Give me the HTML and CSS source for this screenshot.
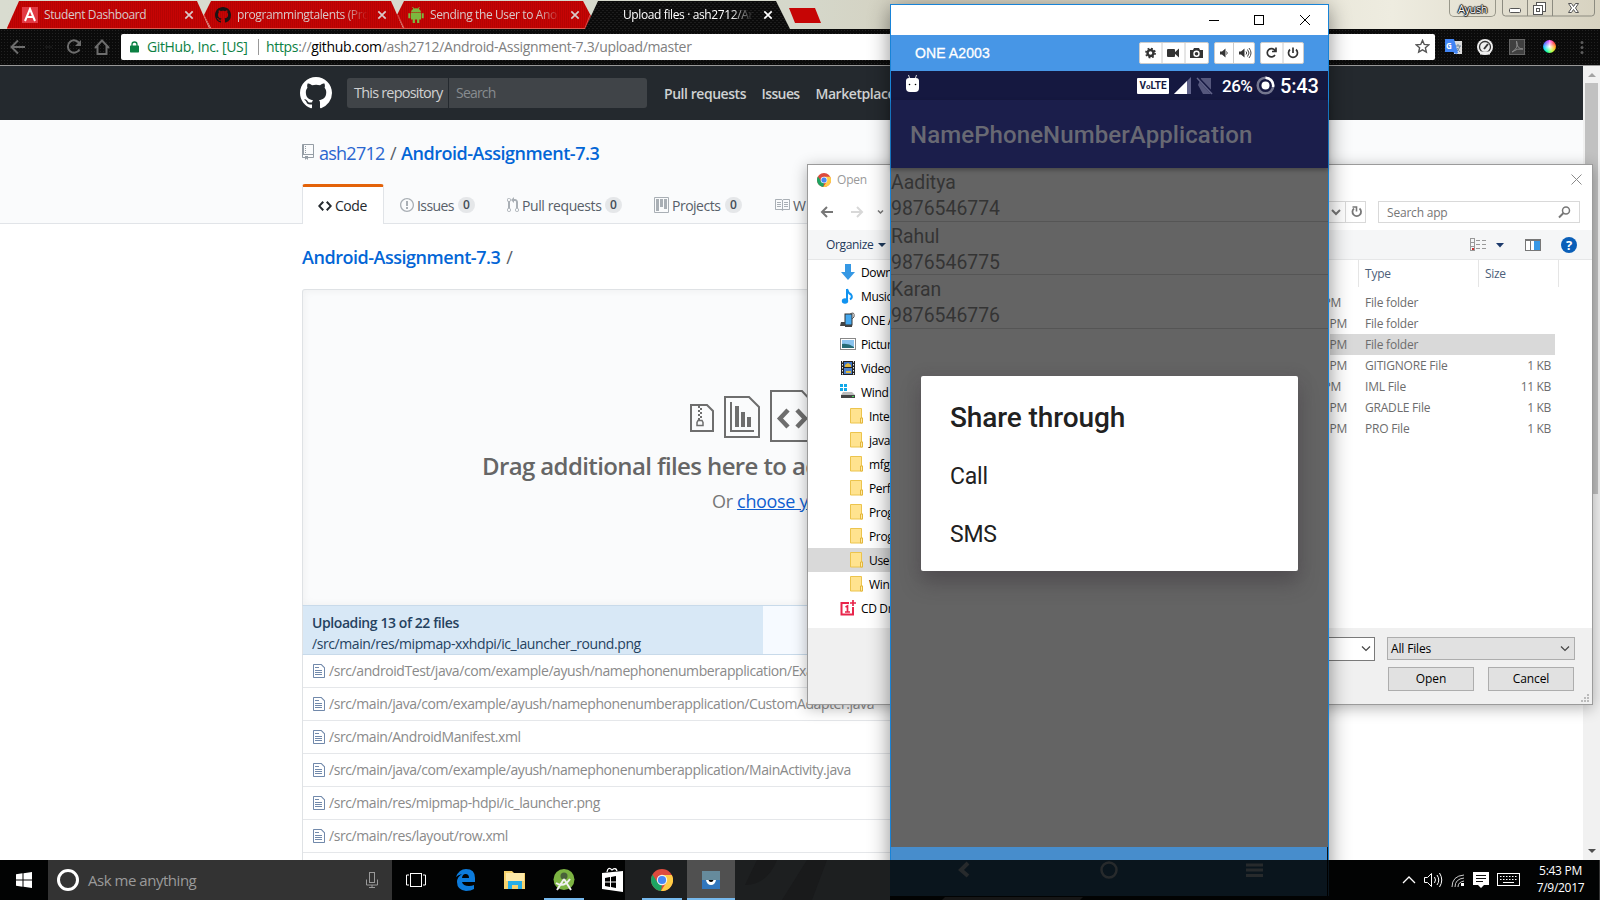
FILE: index.html
```html
<!DOCTYPE html>
<html lang="en">
<head>
<meta charset="utf-8">
<title>Upload files · ash2712/Android-Assignment-7.3</title>
<link rel="stylesheet" href="styles.css">
</head>
<body>
<svg class="defs" width="0" height="0" aria-hidden="true">
  <defs>
    <symbol id="octocat" viewBox="0 0 16 16"><path d="M8 0C3.58 0 0 3.58 0 8c0 3.54 2.29 6.53 5.47 7.59.4.07.55-.17.55-.38 0-.19-.01-.82-.01-1.49-2.01.37-2.53-.49-2.69-.94-.09-.23-.48-.94-.82-1.13-.28-.15-.68-.52-.01-.53.63-.01 1.08.58 1.23.82.72 1.21 1.87.87 2.33.66.07-.52.28-.87.51-1.07-1.78-.2-3.64-.89-3.64-3.95 0-.87.31-1.59.82-2.15-.08-.2-.36-1.02.08-2.12 0 0 .67-.21 2.2.82.64-.18 1.32-.27 2-.27s1.36.09 2 .27c1.53-1.04 2.2-.82 2.2-.82.44 1.1.16 1.92.08 2.12.51.56.82 1.27.82 2.15 0 3.07-1.87 3.75-3.65 3.95.29.25.54.73.54 1.48 0 1.07-.01 1.93-.01 2.2 0 .21.15.46.55.38A8.01 8.01 0 0 0 16 8c0-4.42-3.58-8-8-8z"/></symbol>
    <symbol id="file" viewBox="0 0 12 16"><path d="M6 5H2V4h4v1zM2 8h7V7H2v1zm0 2h7V9H2v1zm0 2h7v-1H2v1zm10-7.500V14c0 .55-.45 1-1 1H1c-.55 0-1-.45-1-1V2c0-.55.45-1 1-1h7.500L12 4.500zM11 5L8 2H1v12h10V5z"/></symbol>
    <symbol id="close" viewBox="0 0 10 10"><path d="M1.300 1.300l7.400 7.400M8.700 1.300L1.300 8.700" fill="none" stroke="currentColor" stroke-width="1.700"/></symbol>
    <symbol id="folder" viewBox="0 0 14 16"><path d="M.5.500h11v9.500h1v5H.5z" fill="#ffe38f" stroke="#ecc44d"/><path d="M10.500 15v-5h2v5z" fill="#ffeaa8" stroke="#e3b63a"/></symbol>
    <symbol id="chrome" viewBox="0 0 22 22">
      <circle cx="11" cy="11" r="11" fill="#dd4b3e"/>
      <path d="M1.500 5.500L6.700 13.500 11 16 10 22A11 11 0 0 1 1.500 5.500z" fill="#1da462"/>
      <path d="M11 6h9.800A11 11 0 0 1 10 22l5.300-8.500z" fill="#ffcd46"/>
      <circle cx="11" cy="11" r="5.200" fill="#f4f4f4"/><circle cx="11" cy="11" r="4.100" fill="#4688f4"/>
    </symbol>
  </defs>
</svg>
<main class="desktop">
  <section class="browser">
    <div class="tabstrip">
      <svg class="tab-shapes" width="830" height="29" viewBox="0 0 830 29">
        <defs><pattern id="stripe" width="2" height="2" patternUnits="userSpaceOnUse"><rect width="2" height="2" fill="#c60404"/><rect width="1" height="2" fill="#b60303"/></pattern>
        <pattern id="weave" width="4" height="4" patternUnits="userSpaceOnUse"><rect width="4" height="4" fill="#0b0b0b"/><rect width="2" height="1" fill="#1d1d1d"/><rect x="2" y="2" width="2" height="1" fill="#1d1d1d"/></pattern></defs>
        <path d="M7 28L19 1H197L209 28z" fill="url(#stripe)"/>
        <path d="M211 28L204 15 211 1H391L403 28z" fill="url(#stripe)"/>
        <path d="M404 28L397 15 404 1H583L591 16 586 28z" fill="url(#stripe)"/>
        <path d="M204 15l6 13M398 15l6 13M590 15l-5 13" stroke="#dc4a45" fill="none"/>
        <path d="M7 28.500H586" stroke="#e05a50"/>
        <path d="M585 29L598 1H776L790 29z" fill="url(#weave)"/>
        <path d="M789 8h26l6 15h-26z" fill="#c60505"/>
      </svg>
      <div class="tabs">
        <div class="tab t1"><svg width="16" height="16"><rect width="16" height="16" fill="#e23a44"/><path d="M3 14L8 2l5 12M5 10h6" fill="none" stroke="#fff" stroke-width="2"/></svg><span>Student Dashboard</span><svg class="x" width="10" height="10"><use href="#close"/></svg></div>
        <div class="tab t2"><svg width="16" height="16" fill="#1b1414"><use href="#octocat"/></svg><span>programmingtalents (Pro</span><svg class="x" width="10" height="10"><use href="#close"/></svg></div>
        <div class="tab t3"><svg width="16" height="16" viewBox="0 0 16 16" fill="#7cb83f"><path d="M3 5.500a5 4.200 0 0 1 10 0zM3 6h10v6.500H3zM.3 6.300h2v5h-2zM13.700 6.300h2v5h-2zM4.700 12h2.200v4H4.700zM9.100 12h2.200v4H9.100z"/><path d="M4.500 0l1.500 2M11.500 0L10 2" stroke="#7cb83f"/></svg><span>Sending the User to Ano</span><svg class="x" width="10" height="10"><use href="#close"/></svg></div>
        <div class="tab t4"><span>Upload files · ash2712/An</span><svg class="x" width="10" height="10"><use href="#close"/></svg></div>
      </div>
      <div class="captions"><span class="user">Ayush</span>
        <svg width="93" height="17" viewBox="0 0 93 17"><path d="M.5 0v13q0 3 3 3h86q3 0 3-3V0M25.500 0v16M50.500 0v16" fill="none" stroke="#8c8b80"/><g fill="#fff" stroke="#555"><rect x="7.500" y="8.500" width="11" height="4" rx="1"/><rect x="34.500" y="2.500" width="9" height="9"/><rect x="31.500" y="5.500" width="9" height="9"/><rect x="34.500" y="8.500" width="3" height="3"/><path d="M66.500 3.500h3l2 3 2-3h3l-3 4.500 3 4.500h-3l-2-3-2 3h-3l3-4.500z"/></g></svg>
      </div>
    </div>
    <div class="toolbar">
      <svg class="nav" width="121" height="36" viewBox="0 0 121 36" fill="none" stroke="#6d6d6d" stroke-width="2"><path d="M25 18H12M18 11.500L11.500 18l6.500 6.500"/><path d="M45 18h7" stroke="#171717"/><path d="M79.500 14.500A6.200 6.200 0 1 0 79.500 20.500"/><path d="M81 11v6h-6z" fill="#6d6d6d" stroke="none"/><path d="M95 19l7-7.500 7 7.500M97.500 17v8h9v-8"/></svg>
      <div class="omnibox"><svg width="9" height="12" viewBox="0 0 9 12"><path d="M2 5V3.500a2.500 2.500 0 0 1 5 0V5" fill="none" stroke="#0b8043" stroke-width="1.300"/><rect y="4.500" width="9" height="7" rx=".7" fill="#0b8043"/></svg><span class="cert">GitHub, Inc. [US]</span><i></i><span class="url"><b>https</b>://<em>github.com</em>/ash2712/Android-Assignment-7.3/upload/master</span>
        <svg class="star" width="15" height="15" viewBox="0 0 16 16"><path d="M8 1.500l1.900 4.300 4.700.5-3.500 3.100 1 4.600L8 11.600 3.900 14l1-4.600L1.400 6.300l4.700-.5z" fill="none" stroke="#555" stroke-width="1.500"/></svg>
      </div>
      <svg class="ext" width="150" height="36" viewBox="0 0 150 36">
        <rect x="10" y="12" width="8" height="13" fill="#dcdcdc"/><path d="M11 17h6M14 15v2m2 0q-1 4-4 6m1-4q2 3 3 4" stroke="#70859b" fill="none"/><path d="M1 10h9l4 14-2 1-3-2H1z" fill="#4285f4"/><text x="2" y="20" font-family="Open Sans" font-weight="700" font-size="8" fill="#fff">G</text>
        <circle cx="41" cy="18" r="8" fill="#eee"/><circle cx="41" cy="18" r="5.500" fill="none" stroke="#333" stroke-width="1.300"/><path d="M40 20l4-5" stroke="#333" stroke-width="2"/><path d="M36 24h10" stroke="#eee" stroke-width="3"/>
        <rect x="65.500" y="10.500" width="15" height="15" fill="#404040" stroke="#666"/><path d="M68 23q7-4 4.500-11 0 8 6.500 8-6-1-11 3z" fill="none" stroke="#888"/>
        <foreignObject x="99" y="11" width="14" height="15"><div class="wheel"></div></foreignObject>
        <g fill="#5d5d5d"><circle cx="138" cy="13.500" r="1.500"/><circle cx="138" cy="18.500" r="1.500"/><circle cx="138" cy="23.500" r="1.500"/></g>
      </svg>
    </div>
    <div class="viewport">
      <div class="page">
        <header class="gh-header">
          <svg width="32" height="32" fill="#fff"><use href="#octocat"/></svg>
          <div class="gh-search"><span>This repository</span><span class="ph">Search</span></div>
          <nav><a class="n1">Pull requests</a><a class="n2">Issues</a><a class="n3">Marketplace</a></nav>
        </header>
        <div class="repohead">
          <h1><svg width="12" height="16" viewBox="0 0 12 16"><path d="M4 9H3V8h1v1zm0-3H3v1h1V6zm0-2H3v1h1V4zm0-2H3v1h1V2zm8-1v12c0 .55-.45 1-1 1H6v2l-1.500-1.500L3 16v-2H1c-.55 0-1-.45-1-1V1c0-.55.45-1 1-1h10c.55 0 1 .45 1 1zm-1 10H1v2h2v-1h3v1h5v-2zm0-10H2v9h9V1z"/></svg><span class="owner">ash2712</span><span class="slash">/</span><strong>Android-Assignment-7.3</strong></h1>
          <div class="reponav">
            <a class="active"><svg width="14" height="16" viewBox="0 0 14 16"><path d="M9.500 3L8 4.500 11.500 8 8 11.500 9.500 13 14 8 9.500 3zm-5 0L0 8l4.500 5L6 11.500 2.500 8 6 4.500 4.500 3z"/></svg><span>Code</span></a>
            <a class="i"><svg width="14" height="16" viewBox="0 0 14 16"><path d="M7 2.300c3.140 0 5.700 2.560 5.700 5.700s-2.560 5.700-5.700 5.700A5.710 5.710 0 0 1 1.300 8c0-3.140 2.560-5.700 5.700-5.700zM7 1C3.140 1 0 4.140 0 8s3.140 7 7 7 7-3.140 7-7-3.140-7-7-7zm1 3H6v5h2V4zm0 6H6v2h2v-2z"/></svg><span>Issues</span><b>0</b></a>
            <a class="p"><svg width="12" height="16" viewBox="0 0 12 16"><path d="M11 11.280V5c-.03-.78-.34-1.470-.94-2.060C9.460 2.350 8.780 2.030 8 2H7V0L4 3l3 3V4h1c.27.02.48.11.69.31.21.2.3.42.31.69v6.280A1.993 1.993 0 0 0 10 15a1.993 1.993 0 0 0 1-3.720zm-1 2.920c-.66 0-1.200-.55-1.200-1.200 0-.65.55-1.200 1.200-1.200.65 0 1.200.55 1.200 1.200 0 .65-.55 1.200-1.200 1.200zM4 3c0-1.110-.89-2-2-2a1.993 1.993 0 0 0-1 3.720v6.560A1.993 1.993 0 0 0 2 15a1.993 1.993 0 0 0 1-3.720V4.720c.59-.34 1-.98 1-1.720zm-.8 10c0 .66-.55 1.200-1.200 1.200-.65 0-1.200-.55-1.200-1.200 0-.65.55-1.200 1.200-1.200.65 0 1.200.55 1.200 1.200zM2 4.200C1.340 4.200.8 3.650.8 3c0-.65.55-1.200 1.200-1.200.65 0 1.200.55 1.200 1.200 0 .65-.55 1.200-1.200 1.200z"/></svg><span>Pull requests</span><b>0</b></a>
            <a class="j"><svg width="15" height="16" viewBox="0 0 15 16"><path fill-rule="evenodd" d="M10 12h3V2h-3v10zm-4-2h3V2H6v8zm-4 4h3V2H2v12zm-1 1h13V1H1v14zM14 0H1a1 1 0 0 0-1 1v14a1 1 0 0 0 1 1h13a1 1 0 0 0 1-1V1a1 1 0 0 0-1-1z"/></svg><span>Projects</span><b>0</b></a>
            <a class="w"><svg width="16" height="16" viewBox="0 0 16 16"><path d="M3 5h4v1H3V5zm0 3h4V7H3v1zm0 2h4V9H3v1zm11-5h-4v1h4V5zm0 2h-4v1h4V7zm0 2h-4v1h4V9zm2-6v9c0 .55-.45 1-1 1H9.500l-1 1-1-1H2c-.55 0-1-.45-1-1V3c0-.55.45-1 1-1h5.500l1 1 1-1H15c.55 0 1 .45 1 1zm-8 .5L7.500 3H2v9h6V3.500zm7-.5H9.500l-.5.5V12h6V3z"/></svg><span>W</span></a>
          </div>
        </div>
        <div class="content">
          <div class="crumb"><strong>Android-Assignment-7.3</strong><span>/</span></div>
          <div class="drop">
            <svg width="126" height="52" viewBox="0 0 126 52" fill="none" stroke="#6e6e6e" stroke-width="2"><path d="M1 15h16l6 6v20H1z"/><g stroke="none" fill="#6e6e6e"><path d="M8 16h2v2H8zM10 18h2v2h-2zM8 20h2v2H8zM10 22h2v2h-2zM8 24h2v2H8zM10 26h2v2h-2zM8 28h2v2H8z"/></g><path d="M7 35.500h6v-3l-1-2H8l-1 2z" stroke-width="1.500"/><path d="M35 7h24l10 10v30H35zM41 12v29h23" /><path d="M47 16v21M53 22v15M59 27v10" stroke-width="4"/><path d="M81 1h31l13 14v36H81z"/><path d="M98 20l-8 8.500 8 8.500M107 20l8 8.500-8 8.500" stroke-width="4.500"/></svg>
            <p class="drag">Drag additional files here to add</p>
            <p class="or">Or <u>choose y</u></p>
          </div>
          <div class="progress"><div><b>Uploading 13 of 22 files</b><span>/src/main/res/mipmap-xxhdpi/ic_launcher_round.png</span></div></div>
          <ul class="files">
            <li><svg width="12" height="16"><use href="#file"/></svg><span>/src/androidTest/java/com/example/ayush/namephonenumberapplication/Exam</span></li>
            <li><svg width="12" height="16"><use href="#file"/></svg><span>/src/main/java/com/example/ayush/namephonenumberapplication/CustomAdapter.java</span></li>
            <li><svg width="12" height="16"><use href="#file"/></svg><span>/src/main/AndroidManifest.xml</span></li>
            <li><svg width="12" height="16"><use href="#file"/></svg><span>/src/main/java/com/example/ayush/namephonenumberapplication/MainActivity.java</span></li>
            <li><svg width="12" height="16"><use href="#file"/></svg><span>/src/main/res/mipmap-hdpi/ic_launcher.png</span></li>
            <li><svg width="12" height="16"><use href="#file"/></svg><span>/src/main/res/layout/row.xml</span></li>
            <li></li>
          </ul>
        </div>
      </div>
      <div class="scrollbar"><i class="up"></i><div class="thumb"></div><i class="down"></i></div>
    </div>
  </section>

  <section class="dialog">
    <div class="d-title"><svg width="14" height="14"><use href="#chrome"/></svg><span>Open</span><svg class="dx" width="11" height="11" viewBox="0 0 11 11"><path d="M.5.5l10 10M10.500.5l-10 10" stroke="#8a8a8a"/></svg></div>
    <div class="d-nav">
      <svg width="80" height="22" viewBox="0 0 80 22" fill="none" stroke-width="2"><path d="M25 11H15M19 6l-5 5 5 5" stroke="#777"/><path d="M43 11h10M49 6l5 5-5 5" stroke="#d8d8d8"/><path d="M70 9.500l2.500 2.500L75 9.500" stroke="#777" stroke-width="1.500"/></svg>
      <div class="refresh"><svg width="31" height="20" viewBox="0 0 31 20"><path d="M16 8l4 4 4-4" fill="none" stroke="#777" stroke-width="2"/><path d="M29.500 0v20" stroke="#d9d9d9"/></svg><svg width="14" height="14" viewBox="0 0 14 14"><path d="M4 3.500A4.300 4.300 0 1 0 9.500 3.500" fill="none" stroke="#777" stroke-width="1.800"/><path d="M2.500 2H6.500v4.500" fill="none" stroke="#777" stroke-width="1.600"/></svg></div>
      <div class="d-search"><span>Search app</span><svg width="13" height="13" viewBox="0 0 13 13" fill="none" stroke="#777"><circle cx="8" cy="4.500" r="3.500" stroke-width="1.500"/><path d="M5.500 7L1 11.500" stroke-width="2"/></svg></div>
    </div>
    <div class="d-tools"><span>Organize</span><i></i>
      <svg width="110" height="16" viewBox="0 0 110 16"><g fill="none" stroke="#999"><rect x=".5" y="1.500" width="4" height="12"/><path d="M6 3.500h4m2 0h4M6 7.500h4m2 0h4M6 11.500h4m2 0h4M1 5.500h3M1 9.500h3"/></g><path d="M2 11h2v2H2z" fill="#c33"/><path d="M26 6h8l-4 4.500z" fill="#1d3b6c"/><rect x="55.500" y="2.500" width="15" height="11" fill="#fff" stroke="#777"/><path d="M55 3h16" stroke="#777" stroke-width="2"/><path d="M60.500 4v9" stroke="#777"/><path d="M64 4h6v9h-6z" fill="#3998e5"/><circle cx="99" cy="8" r="8" fill="#0a5fb8"/><text x="99" y="13" text-anchor="middle" font-family="Open Sans" font-weight="700" font-size="13" fill="#fff">?</text></svg>
    </div>
    <div class="d-body">
      <ul class="tree">
        <li><svg width="16" height="16"><path d="M5 0h6v8h4l-7 8-7-8h4z" fill="#3598e4"/></svg>Down</li>
        <li><svg width="16" height="16"><path d="M7 1q1 4 4 5.500 2 3-1 5" fill="none" stroke="#1193f0" stroke-width="2"/><path d="M7 1v11" stroke="#1193f0" stroke-width="2"/><ellipse cx="5" cy="13" rx="3.200" ry="2.700" fill="#1193f0"/></svg>Music</li>
        <li><svg width="16" height="16"><rect x="5" y="2" width="7" height="11" fill="#46a9ef" stroke="#333"/><path d="M1 10h4v4H0zM5 13h7v2H5z" fill="#444"/><path d="M10 2q5-3 4 3l-2 2" fill="none" stroke="#555"/></svg>ONE A</li>
        <li><svg width="16" height="16"><rect x=".5" y="2.500" width="15" height="11" fill="#fff" stroke="#888"/><path d="M2 4h12v8H2z" fill="#8ac3ee"/><path d="M2 8q6-1 12 3v1H2z" fill="#246b76"/></svg>Pictur</li>
        <li><svg width="16" height="16"><path d="M1 1h14v14H1z" fill="#222"/><path d="M4 2h8v5H4z" fill="#3b73c8"/><path d="M4 8h8v6H4z" fill="#4b80cd"/><path d="M5 5l3-2 3 2v2H5zm1 6h5v2H6z" fill="#e2b93b"/><path d="M2.500 1v14M13.500 1v14" stroke="#eee" stroke-dasharray="1.500 1.500"/></svg>Video</li>
        <li><svg width="16" height="16"><path d="M0 0h3v3H0zm4 0h3v3H4zM0 4h3v3H0zm4 0h3v3H4z" fill="#12a8e8"/><path d="M3 8h9l3 3H1z" fill="#bbb"/><path d="M1 11h14v3H1z" fill="#444"/><path d="M12 12h2v1h-2z" fill="#4d5"/></svg>Wind</li>
        <li class="sub"><svg width="14" height="16"><use href="#folder"/></svg>Inte</li>
        <li class="sub"><svg width="14" height="16"><use href="#folder"/></svg>java</li>
        <li class="sub"><svg width="14" height="16"><use href="#folder"/></svg>mfg</li>
        <li class="sub"><svg width="14" height="16"><use href="#folder"/></svg>Perf</li>
        <li class="sub"><svg width="14" height="16"><use href="#folder"/></svg>Prog</li>
        <li class="sub"><svg width="14" height="16"><use href="#folder"/></svg>Prog</li>
        <li class="sub sel"><svg width="14" height="16"><use href="#folder"/></svg>User</li>
        <li class="sub"><svg width="14" height="16"><use href="#folder"/></svg>Win</li>
        <li><svg width="16" height="16"><path d="M9 3H1.500v11.500H13V7" fill="none" stroke="#e8254b" stroke-width="2"/><path d="M13 0v6M10 3h6M5.500 7l2-1v6M5 12h5" stroke="#e8254b" stroke-width="1.700" fill="none"/></svg>CD Dr</li>
      </ul>
      <div class="list">
        <div class="lrow head"><span></span><span>Type</span><span>Size</span></div>
        <div class="lrow near"><span>PM</span><span>File folder</span><span></span></div>
        <div class="lrow"><span>PM</span><span>File folder</span><span></span></div>
        <div class="lrow sel"><span>PM</span><span>File folder</span><span></span></div>
        <div class="lrow"><span>PM</span><span>GITIGNORE File</span><span>1 KB</span></div>
        <div class="lrow near"><span>PM</span><span>IML File</span><span>11 KB</span></div>
        <div class="lrow"><span>PM</span><span>GRADLE File</span><span>1 KB</span></div>
        <div class="lrow"><span>PM</span><span>PRO File</span><span>1 KB</span></div>
      </div>
    </div>
    <div class="d-foot">
      <div class="combo name"><svg width="10" height="6" viewBox="0 0 10 6"><path d="M1 .5l4 4 4-4" fill="none" stroke="#444" stroke-width="1.200"/></svg></div>
      <div class="combo type"><span>All Files</span><svg width="10" height="6" viewBox="0 0 10 6"><path d="M1 .5l4 4 4-4" fill="none" stroke="#444" stroke-width="1.200"/></svg></div>
      <div class="btns"><span class="btn">Open</span><span class="btn">Cancel</span></div>
      <svg class="grip" width="8" height="8" fill="#bbb"><path d="M6 0h2v2H6zM3 3h2v2H3zM6 3h2v2H6zM0 6h2v2H0zM3 6h2v2H3zM6 6h2v2H6z"/></svg>
    </div>
  </section>

  <section class="phone">
    <div class="p-caption"><svg width="102" height="12" viewBox="0 0 102 12" fill="none" stroke="#000"><path d="M0 6.500h10"/><rect x="45.500" y="1.500" width="9" height="9"/><path d="M91 1l10 10M101 1L91 11"/></svg></div>
    <div class="p-bar"><span>ONE A2003</span>
      <div class="group g1"><svg width="70" height="20" viewBox="0 0 70 20" fill="#333"><path d="M22 0v20M45 0v20" stroke="#ccc"/><circle cx="10.500" cy="10" r="3" fill="none" stroke="#333" stroke-width="2.400"/><circle cx="10.500" cy="10" r="4.600" fill="none" stroke="#333" stroke-width="1.600" stroke-dasharray="1.800 1.813"/><rect x="27" y="6" width="8" height="8" rx="1"/><path d="M34 10l5-4.500v9z"/><path d="M50 7h3l1-2h5l1 2h3v8H50z"/><circle cx="56.500" cy="10.700" r="2.500" stroke="#fff" stroke-width="1.400"/></svg></div>
      <div class="group g2"><svg width="41" height="20" viewBox="0 0 41 20" fill="#333"><path d="M18.500 0v20" stroke="#ccc"/><path d="M5 8.500h2l3.500-3v9L7 11.500H5zM24 8.500h2l3.500-3v9L26 11.500h-2z"/><path d="M11.500 8.500q1.500 1.500 0 3M31 8.500q1.500 1.500 0 3M32.500 6.500q3 3.500 0 7M34 5q4 5 0 10" fill="none" stroke="#444"/></svg></div>
      <div class="group g3"><svg width="43" height="20" viewBox="0 0 43 20" fill="none" stroke="#333" stroke-width="1.700"><path d="M22 0v20" stroke="#ccc" stroke-width="1"/><path d="M14 7.500A4.200 4.200 0 1 0 14 12M15 4.500v4h-4"/><path d="M29 6.500a4.500 4.500 0 1 0 6 0M32 4.500v5.500"/></svg></div>
    </div>
    <div class="p-status">
      <svg width="15" height="18" viewBox="0 0 15 18"><path d="M1 6q0-3 3-3h7q3 0 3 3v7q0 4-4 4H5q-4 0-4-4z" fill="#fff"/><path d="M3.500 0l1 3M11.500 0l-1 3" stroke="#ddd"/><circle cx="4.500" cy="9.500" r=".8"/><circle cx="10.500" cy="9.500" r=".8"/></svg>
      <span class="volte">V<small>o</small>LTE</span>
      <svg class="sig" width="40" height="18" viewBox="0 0 40 18"><path d="M17 0v17H0z" fill="#60628a"/><path d="M13 4v13H0z" fill="#fff"/><path d="M27 1h10v16h-8l-5-9z" fill="#55577c"/><path d="M24 1l15 16" stroke="#171a43" stroke-width="3"/><path d="M23 1l15 16" stroke="#63658a" stroke-width="1.500"/></svg>
      <span class="pct">26%</span>
      <svg width="19" height="19" viewBox="0 0 19 19"><circle cx="9.500" cy="9.500" r="7.800" fill="none" stroke="#74778f" stroke-width="2.500"/><path d="M9.500 1.700A7.800 7.800 0 0 1 17 11" fill="none" stroke="#fff" stroke-width="2.500"/><circle cx="9.500" cy="9.500" r="4" fill="#fff"/></svg>
      <span class="clock">5:43</span>
    </div>
    <div class="p-app">NamePhoneNumberApplication</div>
    <div class="p-list">
      <div><span>Aaditya</span><span>9876546774</span></div>
      <div><span>Rahul</span><span>9876546775</span></div>
      <div><span>Karan</span><span>9876546776</span></div>
      <div class="share"><h2>Share through</h2><p>Call</p><p>SMS</p></div>
    </div>
    <div class="p-foot"></div>
  </section>

  <footer class="taskbar">
    <div class="start"><svg width="16" height="16" fill="#fff"><path d="M0 2.200l6.500-.9v6.200H0zM7.500 1.200L16 0v7.500H7.500zM0 8.500h6.500v6.200L0 13.800zM7.500 8.500H16V16l-8.500-1.200z"/></svg></div>
    <div class="cortana"><i></i><span>Ask me anything</span><svg width="12" height="17" viewBox="0 0 12 17" fill="none" stroke="#999"><rect x="3.500" y=".5" width="5" height="10"/><path d="M.5 7.500v5.500h11V7.500M6 13v3M3 15.500h6"/></svg></div>
    <div class="apps">
      <svg width="525" height="40" viewBox="0 0 525 40">
        <path d="M233 0h292v40H233z" fill="#1d1f20"/><path d="M295 0h48v40h-48z" fill="#505050"/><path d="M365 0h20q-10 25-32 25zM415 0h20l-15 40h-30z" fill="#191a1b"/>
        <g fill="none" stroke="#fff"><rect x="18.500" y="13.500" width="11" height="13"/><path d="M17 15h-2.500v10H17M31 15h2.500v10H31"/></g>
        <path d="M64 17q3-8 10-8 9 0 9 9v4H70q1 4 7 4 3 0 5-1v4q-3 2-8 2-9-1-9-9 0-5 5-8-4 1-6 3zm6 1h7q0-4-3.500-4-3 0-3.500 4z" fill="#0c7bdc"/>
        <path d="M112 11h8l2 2h11v16h-21z" fill="#f6d26b"/><path d="M114 13h18v8h-18z" fill="#fde9a8"/><path d="M116 29v-8h14v8h-4v-4h-6v4z" fill="#25aee8"/>
        <circle cx="172" cy="19.500" r="10.500" fill="#7cb342"/><circle cx="172" cy="16" r="3.500" fill="#49613a"/><path d="M172 19l-7 11M172 19l7 11M164 23q8 5 14-4" stroke="#f0f0f0" stroke-width="2" fill="none"/>
        <path d="M210 13l21-2v21l-21-3z" fill="#fff"/><path d="M215 12q1-6 5-2 4-3 5 1" fill="none" stroke="#fff" stroke-width="1.300"/><path d="M213 18l5-1v4.500h-5zM219 17l5-1v5.500h-5zM213 22.500h5v4.500l-5-1zM219 22.500h5V28l-5-1z" fill="#000"/>
        <use href="#chrome" x="259" y="9" width="22" height="22"/>
        <path d="M310 11h18v9h-18z" fill="#668b9c"/><path d="M310 20h18v9h-18z" fill="#3176bd"/><path d="M314 20h10q-1 5-5 5t-5-5z" fill="#fff"/><path d="M316.500 20h5q-.5 2-2.500 2t-2.500-2z"/>
        <path d="M152 38h40v2h-40zM250 38h40v2h-40zM295 38h48v2h-48z" fill="#76b9ed"/>
      </svg>
    </div>
    <div class="phone-dim"><svg width="439" height="40" viewBox="0 0 439 40"><path d="M0 0h439v36H0z" fill="#0a151d"/><path d="M437.500 0v36" stroke="#000"/><path d="M78 3l-7 7 7 6" fill="none" stroke="#272a2c" stroke-width="4"/><circle cx="219" cy="10" r="7.500" fill="none" stroke="#272a2c" stroke-width="2.500"/><path d="M356 5h17M356 10h17M356 15.500h17" stroke="#272a2c" stroke-width="3"/><path d="M52 40l3-3h138l-3 3z" fill="#161616"/></svg></div>
    <div class="tray">
      <svg width="128" height="40" viewBox="0 0 128 40" fill="none" stroke="#fff"><path d="M9 23l6-6 6 6" stroke-width="1.300"/><path d="M30.500 17.500h3l4-4v13l-4-4h-3zM40.500 17q2 3 0 6M43 15q3.500 5 0 10M45.500 13q4.500 7 0 14"/><path d="M58 27q0-11 12-12M61 27q0-8 9-9M64 27q0-5 6-6" stroke="#ccc"/><path d="M67 23h3v3h-3z" fill="#fff" stroke="none"/><path d="M79 12h16v13h-5l-3 3-3-3h-5z" fill="#fff" stroke="none"/><path d="M82 15.500h10M82 18.500h10M82 21.500h7" stroke="#111"/><rect x="103.500" y="13.500" width="22" height="12"/><path d="M106 16.500h18M106 19.500h18" stroke-dasharray="1.500 1.500"/><path d="M109 22.500h11"/></svg>
      <div class="time"><span>5:43 PM</span><span class="date">7/9/2017</span></div>
    </div>
  </footer>
</main>
</body>
</html>
```
FILE: styles.css
```css
* { box-sizing: border-box; }
body { margin: 0; font-family: "Open Sans", "Noto Sans", sans-serif; }
p, h1, h2, ul { margin: 0; padding: 0; }
ul { list-style: none; }
svg { display: block; flex: none; }
.defs { position: absolute; }
span, a, b, strong, p, li { white-space: nowrap; }
.desktop { position: relative; width: 1600px; height: 900px; overflow: hidden; background: #000; }

/* Browser */
.browser { height: 860px; display: flex; flex-direction: column; background: #fff; overflow: hidden; }
.tabstrip { position: relative; flex: none; height: 29px; display: flex; justify-content: space-between; background: linear-gradient(90deg, #d9dcd0, #d5d8cb 50%, #d4d0bf 58%, #eeece0 87%, #d7d2c0); }
.tab-shapes { position: absolute; left: 0; top: 0; }
.tabs { position: relative; display: flex; font-size: 12px; color: #d9c9c9; }
.tab { display: flex; align-items: center; height: 29px; }
.tab span { width: 131px; margin-left: 6px; overflow: hidden; }
.t1 { padding-left: 22px; width: 215px; letter-spacing: -.4px; }
.t2 { width: 193px; }
.t3 { width: 194px; }
.t2 span, .t3 span, .t4 span { letter-spacing: -.38px; mask-image: linear-gradient(90deg, #000 82%, transparent); }
.t2 .x, .t3 .x { margin-left: 9px; }
.t1 .x { margin-left: 9px; }
.t4 { color: #fff; padding-left: 15px; }
.t4 .x { margin-left: 9px; }
.captions { display: flex; gap: 6px; width: 151px; }
.user { width: 47px; height: 17px; border: 1px solid #98978a; border-top: 0; border-radius: 0 0 5px 5px; text-align: center; font-size: 11px; line-height: 18px; color: #fff; letter-spacing: -.4px; text-shadow: 0 0 1px #000, 1px 0 1px #222, -1px 0 1px #222, 0 1px 1px #222, 0 -1px 1px #222; }
.toolbar { flex: none; height: 37px; display: flex; border-bottom: 1px solid #999; background-color: #0b0b0b; background-image: radial-gradient(#222 30%, transparent 32%); background-size: 3px 3px; }
.omnibox { display: flex; align-items: center; width: 1314px; height: 26px; margin-top: 5px; padding-left: 9px; background: #fff; border-radius: 2px; font-size: 14px; line-height: 18px; padding-bottom: 1px; }
.cert { margin-left: 8px; width: 102px; color: #0b8043; letter-spacing: -.38px; }
.omnibox i { width: 1px; height: 16px; margin: 0 7px 0 9px; background: #999; }
.url { color: #808080; letter-spacing: -.32px; }
.url b { font-weight: 400; color: #0b8043; }
.url em { font-style: normal; color: #000; }
.star { margin-left: auto; margin-right: 5px; }
.ext { margin-left: 9px; }
.wheel { width: 13px; height: 13px; border-radius: 50%; background: radial-gradient(#fff, transparent 70%), conic-gradient(#f6f, #f33, #fa0, #af3, #0f9, #0cf, #55f, #d4f); }
.viewport { flex: 1; display: flex; min-height: 0; }
.page { flex: none; width: 1583px; overflow: hidden; }
.scrollbar { width: 17px; background: #f1f1f1; display: flex; flex-direction: column; align-items: center; height: 794px; }
.scrollbar i { border: 4px solid transparent; height: 0; }
.up { border-top: 0 !important; border-bottom-color: #a3a3a3 !important; margin: 7px 0 6px; }
.thumb { width: 13px; height: 411px; background: #c1c1c1; }
.down { border-bottom: 0 !important; border-top-color: #505050 !important; margin-top: auto; margin-bottom: 7px; }

/* Repository page */
.gh-header { display: flex; align-items: center; height: 54px; padding-left: 300px; background: #24292e; }
.gh-search { display: flex; width: 300px; height: 30px; margin-left: 15px; background: #404448; border-radius: 3px; line-height: 30px; font-size: 14px; color: #d0d1d2; letter-spacing: -.4px; }
.gh-search span:first-child { width: 102px; padding-left: 7px; border-right: 1px solid #24292e; letter-spacing: -.8px; font-size: 14.500px; }
.ph { padding-left: 7px; color: #888c90; letter-spacing: -.8px; }
nav { display: flex; margin-left: 17px; font-size: 14px; font-weight: 600; color: #cfd1d2; letter-spacing: -.45px; }
.n1 { width: 97.500px; }
.n2 { width: 54px; letter-spacing: -.6px; }
.repohead { height: 104px; padding-left: 302px; display: flex; flex-direction: column; justify-content: space-between; background: #fafbfc; border-bottom: 1px solid #e1e4e8; }
h1 { display: flex; align-items: center; height: 24px; margin-top: 21px; font-size: 18px; font-weight: 400; color: #0366d6; }
h1 svg { fill: #959da5; margin-top: -2px; }
.owner { margin-left: 5px; width: 66px; letter-spacing: -.75px; color: #2a66cf; }
.slash { width: 16px; padding-left: 5px; color: #586069; }
h1 strong, .crumb strong { font-weight: 600; letter-spacing: -.47px; }
.reponav { display: flex; margin-bottom: -1px; height: 40px; font-size: 14px; color: #586069; }
.reponav a { display: flex; align-items: center; height: 40px; padding-top: 2px; letter-spacing: -.3px; }
.reponav svg { fill: #a9afb5; margin-right: 3px; }
.reponav .active { width: 82px; height: 40px; padding: 0 0 0 15px; background: #fff; border: 1px solid #e1e4e8; border-top: 3px solid #e36209; border-bottom: 0; border-radius: 3px 3px 0 0; color: #24292e; letter-spacing: -.45px; }
.active svg { fill: #24292e; }
.reponav b { height: 16px; min-width: 17px; padding: 0 5px; margin-left: 3px; border-radius: 10px; background: #e5e7e9; color: #444d56; font-size: 12px; line-height: 16px; font-weight: 600; }
.i { width: 107px; padding-left: 16px; }
.i span { width: 38px; letter-spacing: -.6px; }
.p { width: 147px; padding-left: 16px; }
.p span { width: 80px; letter-spacing: -.4px; }
.j { width: 120px; padding-left: 16px; }
.j span { width: 50px; letter-spacing: -.5px; }
.w { padding-left: 16px; }
.content { width: 980px; margin-left: 302px; }
.crumb { height: 65px; padding-top: 21px; font-size: 18px; line-height: 25px; color: #0366d6; }
.crumb span { margin-left: 6px; color: #586069; }
.drop { height: 316px; border: 1px solid #dfe2e5; border-bottom: 0; border-radius: 3px 3px 0 0; background: #fafbfc; box-shadow: inset 0 0 8px rgba(27,31,35,.06); padding-top: 100px; }
.drop svg { margin-left: 387px; }
.drag { margin: 7px 0 0 179px; font-size: 24px; font-weight: 600; line-height: 33px; color: #666; letter-spacing: -.62px; }
.or { margin: 6px 0 0 409px; font-size: 18px; line-height: 27px; color: #767676; letter-spacing: -.32px; }
.or u { color: #0f5fd0; }
.progress { height: 50px; border: 1px solid #c8daea; border-left-color: #dfe2e5; background: #f6faff; }
.progress div { width: 460px; height: 48px; padding: 6px 0 0 9px; background: #d8e8f6; display: flex; flex-direction: column; font-size: 14px; line-height: 21px; color: #25425f; }
.progress b { font-weight: 600; font-size: 14px; letter-spacing: -.42px; }
.progress span { letter-spacing: -.41px; }
.files { border-left: 1px solid #dfe2e5; }
.files li { display: flex; align-items: center; height: 33px; padding: 0 0 1px 10px; border-bottom: 1px solid #e5e7ea; font-size: 14px; color: #8a8a8a; letter-spacing: -.42px; }
.files svg { fill: #7189ab; margin-right: 4px; margin-top: 1px; }

/* Open dialog */
.dialog { position: absolute; left: 807px; top: 164px; width: 786px; height: 541px; border: 1px solid #9b9b9b; background: #fff; box-shadow: 0 3px 14px rgba(0,0,0,.3); font-size: 12px; display: flex; flex-direction: column; }
.d-title { display: flex; align-items: center; height: 29px; padding: 0 10px 0 9px; color: #999; }
.d-title span { margin-left: 6px; letter-spacing: -.2px; }
.dx { margin-left: auto; }
.d-nav { display: flex; align-items: center; height: 36px; }
.refresh { display: flex; align-items: center; width: 51px; height: 22px; margin-left: 427px; border: 1px solid #d9d9d9; gap: 3px; }
.d-search { display: flex; align-items: center; justify-content: space-between; width: 202px; height: 22px; margin-left: 12px; padding: 0 8px; border: 1px solid #d9d9d9; color: #767676; letter-spacing: -.2px; }
.d-tools { display: flex; align-items: center; height: 30px; padding-left: 18px; background: #f5f6f7; border-bottom: 1px solid #e6e7e8; color: #1e395b; }
.d-tools span { width: 50px; letter-spacing: -.35px; }
.d-tools i { margin-left: 2px; border: 4px solid transparent; border-top-color: #1e395b; border-bottom: 0; }
.d-tools svg { margin-left: 584px; }
.d-body { display: flex; justify-content: space-between; height: 368px; }
.tree { width: 84px; overflow: hidden; color: #000; }
.tree li { display: flex; align-items: center; gap: 5px; height: 24px; padding-left: 32px; letter-spacing: -.35px; }
.tree .sub { padding-left: 42px; }
.tree .sel { background: #d9d9d9; }
.list { width: 262px; color: #6d6d6d; }
.lrow { display: grid; grid-template-columns: 35px 108px 78px; width: 225px; height: 21px; line-height: 21px; letter-spacing: -.2px; }
.lrow span:first-child { padding-right: 18px; text-align: right; margin-left: -10px; }
.lrow.near span:first-child { padding-right: 24px; }
.lrow span:last-child { text-align: right; letter-spacing: -.35px; }
.lrow.sel { background: #d9d9d9; }
.lrow.head { grid-template-columns: 29px 120px 80px; width: 229px; height: 25px; margin-bottom: 7px; line-height: 27px; color: #4c607a; }
.lrow.head span { border-right: 1px solid #e5e5e5; padding: 0 0 0 6px; text-align: left; }
.d-foot { position: relative; flex: 1; background: #f0f0f0; display: grid; grid-template-columns: 188px; justify-content: end; padding: 9px 17px 0 0; align-content: start; gap: 7px; }
.combo { display: flex; align-items: center; justify-content: space-between; height: 23px; padding: 0 4px; }
.combo.type { padding-left: 3px; background: #e1e1e1; border: 1px solid #adadad; letter-spacing: -.15px; }
.combo.name { position: absolute; left: 501px; top: 9px; width: 66px; height: 24px; justify-content: flex-end; background: #fff; border: 1px solid #7a7a7a; padding-right: 3px; }
.btns { display: flex; gap: 14px; padding-left: 1px; }
.btn { width: 86px; height: 24px; border: 1px solid #adadad; background: #e1e1e1; text-align: center; line-height: 22px; letter-spacing: -.1px; }
.grip { position: absolute; right: 3px; bottom: 2px; }

/* Mirrored phone */
.phone { position: absolute; left: 890px; top: 4px; width: 439px; height: 893px; border: 1px solid #1883d7; background: #646464; box-shadow: 0 4px 20px rgba(0,0,0,.45); display: flex; flex-direction: column; font-family: Roboto, sans-serif; }
.p-caption { height: 30px; background: #fff; display: flex; align-items: center; justify-content: flex-end; padding-right: 17px; }
.p-bar { height: 36px; display: flex; align-items: center; padding-left: 24px; background: #4796e6; color: #fff; font: 14px "Liberation Sans", sans-serif; }
.p-bar span { width: 224px; -webkit-text-stroke: .3px #fff; letter-spacing: .1px; }
.group { height: 22px; border: 1px solid #ccc; border-radius: 2px; background: #fff; overflow: hidden; }
.g1 { width: 70px; }
.g2 { width: 41px; margin-left: 5px; }
.g3 { width: 44px; margin-left: 5px; }
.p-status { height: 29px; display: flex; align-items: center; padding-left: 14px; background: #151840; color: #fff; }
.p-status > svg:first-child { margin-top: -3px; }
.volte { width: 32px; height: 16px; margin-left: 217px; background: #fff; border-radius: 1px; color: #151840; font-size: 10px; line-height: 16px; font-weight: 700; text-align: center; }
.volte small { font-size: 8px; }
.sig { margin-left: 5px; }
.pct { width: 34px; margin-left: 8px; font-size: 17px; font-weight: 500; letter-spacing: -.5px; }
.clock { margin-left: 5px; font-size: 20px; font-weight: 500; letter-spacing: -.2px; }
.p-app { height: 68px; padding: 2px 0 0 19px; line-height: 67px; background: #1b1e4b; color: #686973; font-size: 24px; font-weight: 500; letter-spacing: .1px; box-shadow: 0 2px 4px rgba(0,0,0,.3); z-index: 1; }
.p-list { position: relative; flex: 1; font-size: 19.400px; color: #343434; }
.p-list > div:not(.share) { display: flex; flex-direction: column; height: 53.500px; padding-top: 2px; line-height: 26px; border-bottom: 1px solid #555; }
.share { position: absolute; left: 30px; top: 208px; width: 377px; height: 195px; padding: 24px 0 0 29px; background: #fff; border-radius: 2px; box-shadow: 0 12px 20px rgba(50,40,50,.35), 0 0 14px rgba(90,80,90,.25); color: #212121; }
.share h2 { font-size: 28px; font-weight: 500; line-height: 36px; letter-spacing: -.1px; }
.share p { font-size: 23px; line-height: 58px; letter-spacing: -.2px; }
.share h2 + p { margin-top: 12px; }
.p-foot { height: 49px; background: #478dcc; border-right: 1px solid #111; }

/* Taskbar */
.taskbar { position: absolute; left: 0; top: 860px; width: 1600px; height: 40px; display: flex; background: #020303; }
.start { width: 48px; padding: 12px 0 0 16px; }
.cortana { display: flex; align-items: center; width: 344px; padding: 0 14px 0 9px; background: #333; color: #9a9a9a; font-size: 15px; }
.cortana i { width: 22px; height: 22px; border: 3px solid #fff; border-radius: 50%; }
.cortana span { margin-left: 9px; letter-spacing: -.47px; }
.cortana svg { margin-left: auto; }
.apps { width: 498px; overflow: hidden; }
.phone-dim { width: 439px; }
.tray { display: flex; flex: 1; padding-left: 65px; border-right: 1px solid #333; color: #fff; }
.time { display: flex; flex-direction: column; width: 77px; padding-top: 2px; font-size: 12px; line-height: 17px; letter-spacing: -.3px; text-align: center; }
```
